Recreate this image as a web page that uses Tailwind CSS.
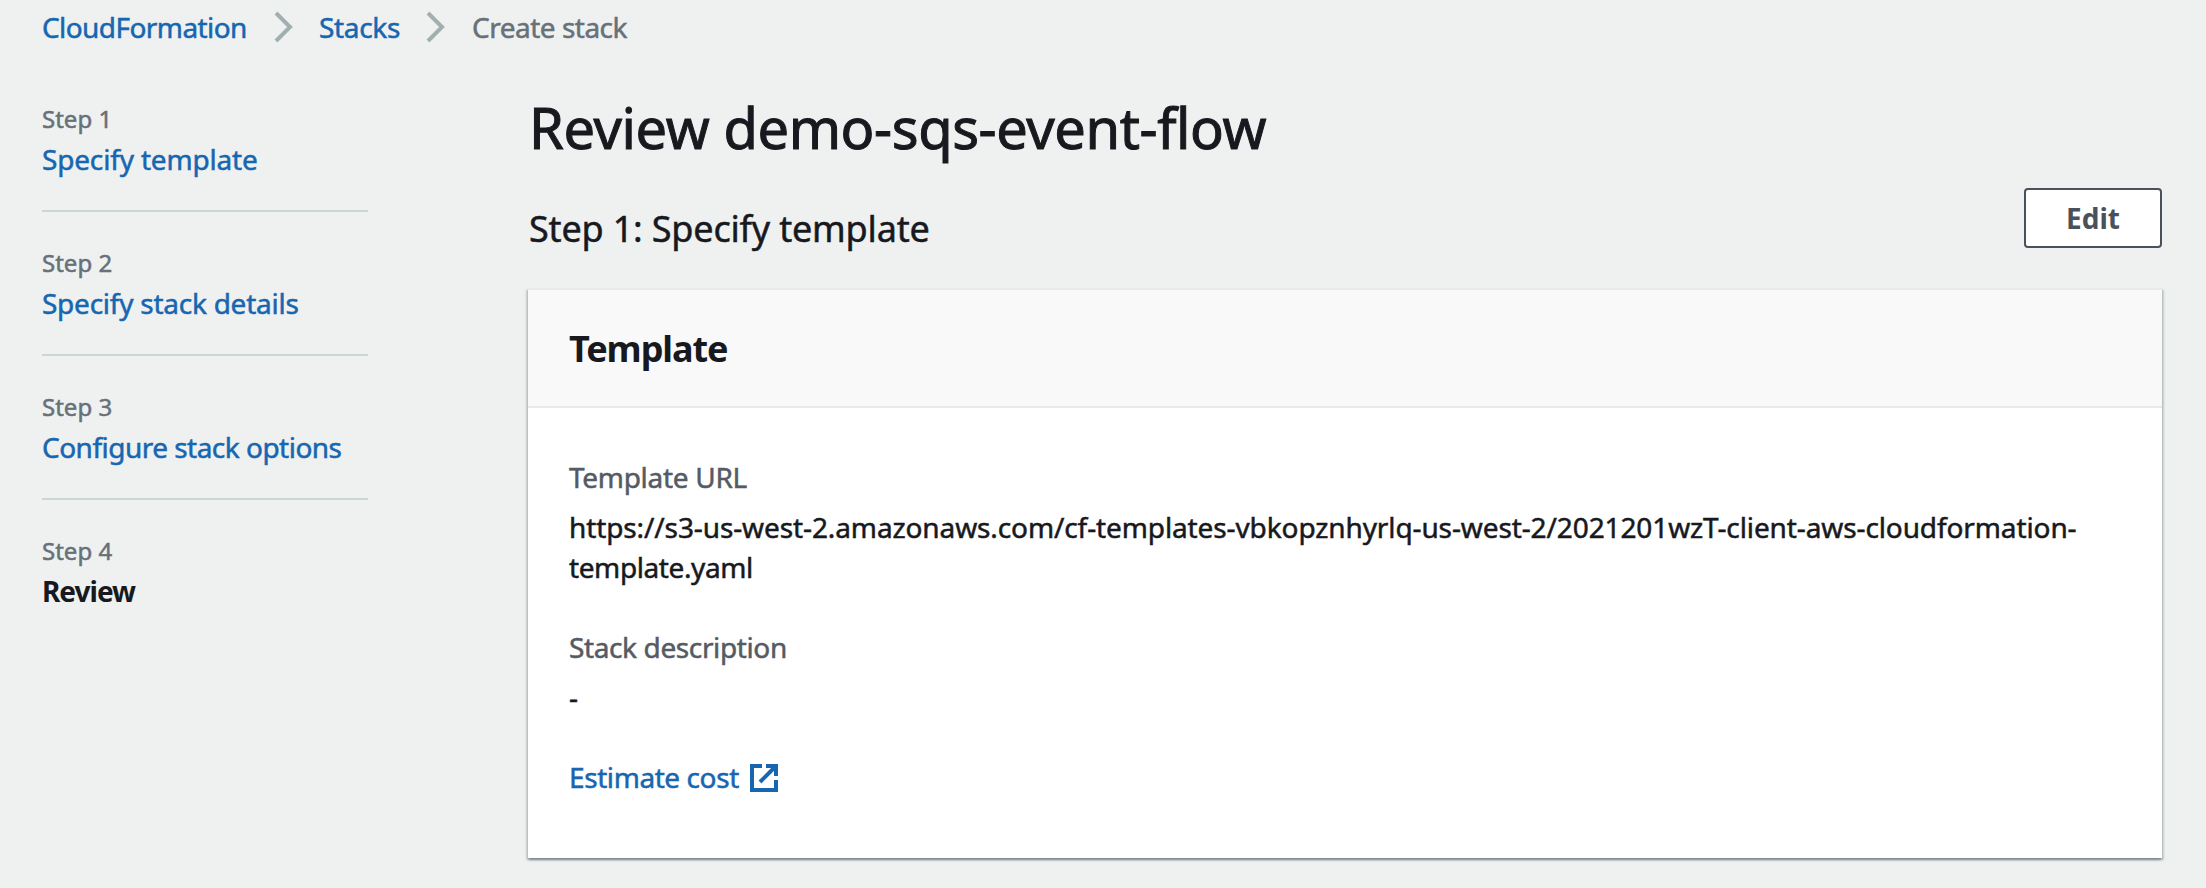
<!DOCTYPE html>
<html lang="en">
<head>
<meta charset="utf-8">
<title>CloudFormation - Create stack</title>
<script src="https://cdn.jsdelivr.net/npm/@tailwindcss/browser@4"></script>
</head>
<body class="h-[888px] overflow-hidden bg-[#eff1f1] pt-[7px] font-['Noto_Sans',sans-serif] text-[28px] leading-10 text-[#17191e] [-webkit-text-stroke:0.5px]">
  <nav class="flex h-10 items-center pl-[42px] whitespace-nowrap">
    <a class="w-[232px] tracking-[-0.58px] text-[#1766b0]">CloudFormation</a>
    <svg class="h-8 w-[19px]" viewBox="0 0 19 32" fill="none" stroke="#a2afb0" stroke-width="4"><path d="M2 2l14 14L2 30"/></svg>
    <a class="ml-[26px] w-[107px] tracking-[-0.32px] text-[#1766b0]">Stacks</a>
    <svg class="h-8 w-[19px]" viewBox="0 0 19 32" fill="none" stroke="#a2afb0" stroke-width="4"><path d="M2 2l14 14L2 30"/></svg>
    <span class="ml-[27px] tracking-[-0.5px] text-[#687078]">Create stack</span>
  </nav>

  <div class="flex">
    <aside class="mt-14 ml-[42px] w-[326px] shrink-0 whitespace-nowrap">
      <div class="mb-[35px] border-b-2 border-[#ccd6d4] pb-[31px]">
        <div class="mb-1 text-2xl leading-8 text-[#687078]">Step 1</div>
        <a class="block tracking-[-0.17px] text-[#1766b0]">Specify template</a>
      </div>
      <div class="mb-[35px] border-b-2 border-[#ccd6d4] pb-[31px]">
        <div class="mb-1 text-2xl leading-8 text-[#687078]">Step 2</div>
        <a class="block tracking-[-0.25px] text-[#1766b0]">Specify stack details</a>
      </div>
      <div class="mb-[35px] border-b-2 border-[#ccd6d4] pb-[31px]">
        <div class="mb-1 text-2xl leading-8 text-[#687078]">Step 3</div>
        <a class="block tracking-[-0.52px] text-[#1766b0]">Configure stack options</a>
      </div>
      <div>
        <div class="mb-1 text-2xl leading-8 text-[#687078]">Step 4</div>
        <div class="font-bold tracking-[-1px] [-webkit-text-stroke:0]">Review</div>
      </div>
    </aside>

    <main class="mt-[44px] ml-40 w-[1634px]">
      <h1 class="pl-px text-[56px] leading-[72px] tracking-[-0.4px] [-webkit-text-stroke:1px]">Review demo-sqs-event-flow</h1>
      <div class="mt-[25px] flex h-[100px] items-start justify-between">
        <h2 class="mt-[19px] pl-px text-4xl leading-[44px] tracking-[-0.18px]">Step 1: Specify template</h2>
        <button class="h-[60px] w-[138px] rounded border-2 border-[#4b515b] bg-white pb-px text-center font-bold text-[#4b515b] [-webkit-text-stroke:0]">Edit</button>
      </div>
      <section class="h-[570px] border-t-2 border-[#e6eaea] bg-white shadow-[0_2px_2px_0_rgba(0,28,36,0.3),2px_2px_2px_0_rgba(0,28,36,0.15),-2px_2px_2px_0_rgba(0,28,36,0.15)]">
        <header class="border-b-2 border-[#e6eaea] bg-[#f9f9f9] px-[41px] pt-[37px] pb-[35px]">
          <h3 class="text-4xl leading-[44px] font-bold tracking-[-1.07px] [-webkit-text-stroke:0]">Template</h3>
        </header>
        <div class="px-[41px] pt-[49px]">
          <div class="mb-2.5 tracking-[-0.3px] text-[#545b64]">Template URL</div>
          <div class="mb-10 whitespace-nowrap tracking-[-0.11px]">https://s3-us-west-2.amazonaws.com/cf-templates-vbkopznhyrlq-us-west-2/2021201wzT-client-aws-cloudformation-<br><span class="tracking-[-0.4px]">template.yaml</span></div>
          <div class="mb-2.5 tracking-[-0.38px] text-[#545b64]">Stack description</div>
          <div class="mb-10">-</div>
          <a class="flex items-center text-[#1766b0]">
            <span class="w-[181px] tracking-[-0.42px]">Estimate cost</span>
            <svg class="mt-0.5 size-7" viewBox="0 0 28 28" fill="none" stroke="currentColor" stroke-width="4"><path d="M12 2H2v24h24V16M16 2h10v10M25 3L10 18"/><path d="M20 3h5v5z" fill="currentColor" stroke="none"/></svg>
          </a>
        </div>
      </section>
    </main>
  </div>
</body>
</html>
